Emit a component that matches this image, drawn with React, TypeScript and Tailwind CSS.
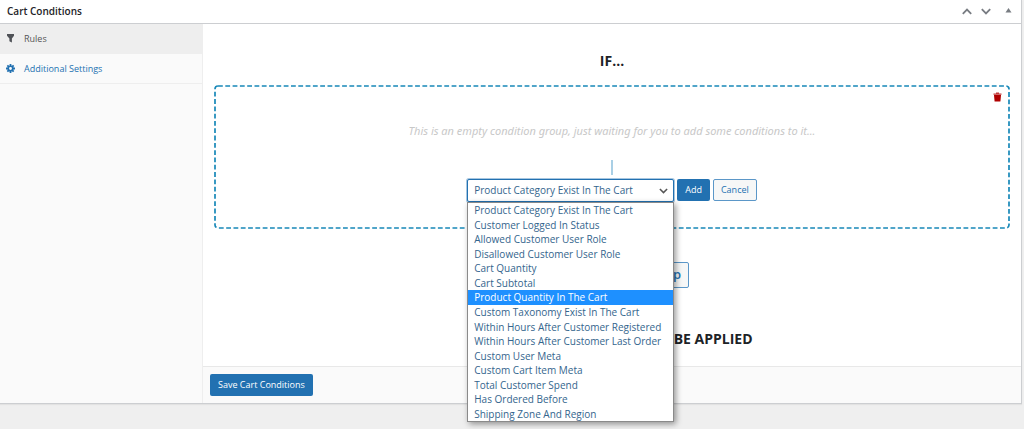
import { useState } from "react";

const conditions = [
  "Product Category Exist In The Cart",
  "Customer Logged In Status",
  "Allowed Customer User Role",
  "Disallowed Customer User Role",
  "Cart Quantity",
  "Cart Subtotal",
  "Product Quantity In The Cart",
  "Custom Taxonomy Exist In The Cart",
  "Within Hours After Customer Registered",
  "Within Hours After Customer Last Order",
  "Custom User Meta",
  "Custom Cart Item Meta",
  "Total Customer Spend",
  "Has Ordered Before",
  "Shipping Zone And Region",
];

function FilterIcon() {
  return (
    <svg viewBox="0 0 9 9" className="size-[9px]" fill="#4f5257" aria-hidden="true">
      <path d="M1 0h7v1.8L5.9 4.4V8.4L3.4 7.2V4.4L1 1.8z" />
    </svg>
  );
}

function GearIcon() {
  return (
    <svg viewBox="0 0 20 20" className="size-[9px]" aria-hidden="true">
      <g stroke="#2271b1" strokeWidth="4">
        <path d="M10 0v20M0 10h20M3 3l14 14M17 3L3 17" />
      </g>
      <circle cx="10" cy="10" r="5" fill="#fafafa" stroke="#2271b1" strokeWidth="3.6" />
    </svg>
  );
}

function TrashIcon() {
  return (
    <svg viewBox="0 0 9 10" className="h-[10px] w-[9px]" aria-hidden="true">
      <path d="M3 1.4V0.5h3v0.9h2.5v1.4h-8V1.4z" fill="#c23a3a" />
      <path d="M1 3h7L7.4 9.6H1.6z" fill="#b00000" />
    </svg>
  );
}

function Chevron({ up, className }: { up?: boolean; className?: string }) {
  return (
    <svg viewBox="0 0 10 7" className={className ?? "h-[7px] w-[10px]"} fill="none" strokeWidth="1.8" stroke="currentColor" aria-hidden="true">
      <path d={up ? "M0.8 5.8L5 1.6l4.2 4.2" : "M0.8 1.2L5 5.4l4.2-4.2"} />
    </svg>
  );
}

export default function App() {
  const [selected, setSelected] = useState(conditions[0]);
  const [active, setActive] = useState("Product Quantity In The Cart");

  return (
    <div className="min-h-screen bg-[#efefef] pr-[2px] font-['Open_Sans','Noto_Sans',sans-serif] text-[9px] text-[#1d2327]">
      <section className="border-r border-b border-[#ccced1] bg-white shadow-[0_1px_1px_rgba(0,0,0,0.05)]">
        <header className="flex h-6 items-center justify-between border-b border-[#ccced1] pr-[9px] pl-[7px]">
          <h2 className="text-[10px] font-semibold">Cart Conditions</h2>
          <div className="flex items-center text-[#787c82]">
            <button type="button" aria-label="Move up" className="mr-[9px]"><Chevron up /></button>
            <button type="button" aria-label="Move down" className="mr-[14px]"><Chevron /></button>
            <button type="button" aria-label="Toggle panel" className="pb-[3px]">
              <svg viewBox="0 0 7 6" className="h-[6px] w-[7px]" fill="currentColor" aria-hidden="true"><path d="M3.5 1L6.5 5.5h-6z" /></svg>
            </button>
          </div>
        </header>

        <div className="flex">
          <nav className="w-[203px] shrink-0 border-r border-[#eeeeee] bg-[#fafafa]">
            <a href="#rules" className="flex h-[30px] items-center gap-[9px] border-b border-[#eeeeee] bg-[#eeeeee] pl-[6px] text-[#555]">
              <FilterIcon />
              Rules
            </a>
            <a href="#settings" className="flex h-[30px] items-center gap-[9px] border-b border-[#eeeeee] pl-[6px] text-[#2271b1]">
              <GearIcon />
              Additional Settings
            </a>
          </nav>

          <main className="min-w-0 flex-1">
            <div className="flex h-[342px] flex-col items-center px-[11px] pt-[27px]">
              <h3 className="text-[14px] leading-5 font-bold">IF...</h3>

              <div className="relative mt-[14px] flex h-[144px] w-full flex-col items-center pt-[36px]">
                <svg className="pointer-events-none absolute inset-0 h-full w-full" aria-hidden="true">
                  <rect x="1" y="1" rx="3" className="h-[calc(100%-2px)] w-[calc(100%-2px)]" fill="none" stroke="#1788b8" strokeWidth="1.7" strokeDasharray="4.8 2.5" />
                </svg>
                <button type="button" aria-label="Delete condition group" className="absolute top-[7px] right-[8px]">
                  <TrashIcon />
                </button>
                <p className="font-['Noto_Sans','Open_Sans',sans-serif] text-[11px] leading-5 text-[#c8c8c8] italic">
                  This is an empty condition group, just waiting for you to add some conditions to it...
                </p>
                <div className="mt-[19px] h-[15px] w-[2px] bg-[#a9cfe5]" />

                <div className="mt-[4px] flex items-start gap-[3px]">
                  <div className="relative w-[207px]">
                    <select
                      aria-label="Condition type"
                      value={selected}
                      onChange={(e) => setSelected(e.target.value)}
                      className="h-[23px] w-full appearance-none rounded-[2px] border border-[#2271b1] bg-white pl-[6px] text-[10px] text-[#34658d] shadow-[0_0_0_1px_rgba(34,113,177,0.4)]"
                    >
                      {conditions.map((c) => (
                        <option key={c}>{c}</option>
                      ))}
                    </select>
                    <Chevron className="pointer-events-none absolute top-[9px] right-[6px] h-[6px] w-[9px] text-[#555]" />
                    <ul
                      role="listbox"
                      aria-label="Condition types"
                      className="absolute top-[23px] left-0 z-10 grid h-[220px] w-full auto-rows-fr border border-[#8a8a8a] bg-white text-[10px] text-[#34658d] shadow-[2px_2px_6px_rgba(0,0,0,0.4)]"
                    >
                      {conditions.map((c) => (
                        <li
                          key={c}
                          role="option"
                          aria-selected={c === active}
                          onMouseEnter={() => setActive(c)}
                          onClick={() => setSelected(c)}
                          className={
                            c === active
                              ? "flex items-center bg-[#1e90ff] pl-[6px] leading-none whitespace-nowrap text-white"
                              : "flex items-center pl-[6px] leading-none whitespace-nowrap"
                          }
                        >
                          {c}
                        </li>
                      ))}
                    </ul>
                  </div>
                  <button type="button" className="h-[22px] rounded-[2px] bg-[#2271b1] px-2 text-white">Add</button>
                  <button type="button" className="h-[22px] rounded-[2px] border border-[#5b97c8] bg-[#f6f7f7] px-[7px] text-[#2271b1]">Cancel</button>
                </div>
              </div>

              <button type="button" className="mt-[33px] h-[26px] rounded-[2px] border border-[#5b97c8] bg-[#f6f7f7] px-[7px] text-[13px] font-semibold text-[#2271b1]">
                Add Conditions Group
              </button>
              <h3 className="mt-[41px] text-[14px] leading-5 font-bold whitespace-nowrap">THE FOLLOWING ITEMS WILL BE APPLIED</h3>
            </div>

            <footer className="flex h-[37px] items-center border-t border-[#e8e8e8] bg-[#fafafa] pl-[7px]">
              <button type="button" className="h-[22px] rounded-[2px] bg-[#2271b1] px-2 text-white">Save Cart Conditions</button>
            </footer>
          </main>
        </div>
      </section>
    </div>
  );
}
